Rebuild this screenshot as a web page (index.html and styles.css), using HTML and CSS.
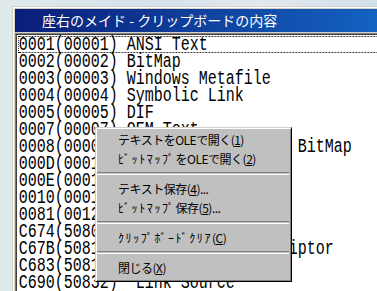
FILE: index.html
```html
<!DOCTYPE html>
<html lang="ja">
<head>
  <meta charset="UTF-8">
  <title>座右のメイド - クリップボードの内容</title>
  <link rel="stylesheet" href="styles.css">
</head>
<body>
  <div class="desk">
    <div class="window">
      <div class="titlebar">座右のメイド - クリップボードの内容</div>
      <div class="listbox">
        <div class="rows">
          <div class="row focus">0001(00001) ANSI Text</div>
          <div class="row">0002(00002) BitMap</div>
          <div class="row">0003(00003) Windows Metafile</div>
          <div class="row">0004(00004) Symbolic Link</div>
          <div class="row">0005(00005) DIF</div>
          <div class="row">0007(00007) OEM Text</div>
          <div class="row">0008(00008) Device Independent BitMap</div>
          <div class="row">000D(00013) Unicode Text</div>
          <div class="row">000E(00014) Enhanced Metafile</div>
          <div class="row">0010(00016) Locale Identifier</div>
          <div class="row">0081(00129) Display Text</div>
          <div class="row">C674(50804) DataObject</div>
          <div class="row">C67B(50811) *Link Source Descriptor</div>
          <div class="row">C683(50819) Object Descriptor</div>
          <div class="row">C690(50832) *Link Source</div>
        </div>
      </div>
    </div>
  </div>

  <div class="menu">
    <div class="item">テキストをOLEで開く(<u>1</u>)</div>
    <div class="item"><span class="hk">ﾋﾞｯﾄﾏｯﾌﾟ</span>をOLEで開く(<u>2</u>)</div>
    <div class="sep"></div>
    <div class="item">テキスト保存(<u>4</u>)...</div>
    <div class="item"><span class="hk">ﾋﾞｯﾄﾏｯﾌﾟ</span>保存(<u>5</u>)...</div>
    <div class="sep"></div>
    <div class="item"><span class="hk">ｸﾘｯﾌﾟﾎﾞｰﾄﾞｸﾘｱ</span>(<u>C</u>)</div>
    <div class="sep"></div>
    <div class="item">閉じる(<u>X</u>)</div>
  </div>
</body>
</html>
```

FILE: styles.css
```css
html, body {
  margin: 0;
  padding: 0;
  width: 377px;
  height: 291px;
  overflow: hidden;
}

body {
  position: relative;
  background: linear-gradient(to right, #dfeaea, #d4e2ec 40%, #e4e8ee 70%, #d0e0ea);
  font-family: "Noto Sans CJK JP", sans-serif;
}

.desk {
  padding: 6px 0 0 12px;
}

.window {
  background-color: #d4d0c8;
  border-top: 1px solid #d4d0c8;
  border-left: 1px solid #d4d0c8;
  box-shadow: inset 1px 1px 0 #ffffff;
  padding: 2px 0 0 2px;
  height: 290px;
}

.titlebar {
  height: 23px;
  line-height: 23px;
  padding-left: 27px;
  color: #fff;
  font-size: 14px;
  background: linear-gradient(to right, #0a1e78, #1462c0);
  white-space: nowrap;
}

.listbox {
  margin-top: 1px;
  border-top: 1px solid #808080;
  border-left: 1px solid #808080;
  box-shadow: inset 1px 1px 0 #404040;
  background-color: #fff;
  height: 260px;
  padding: 2px 0 0 2px;
  overflow: hidden;
}

.rows {
  width: 480px;
  transform: scaleX(0.75);
  transform-origin: left top;
  font-family: "Liberation Mono", monospace;
  font-size: 20px;
  color: #000;
}

.row {
  height: 17px;
  line-height: 17px;
  white-space: pre;
  padding-left: 1px;
}

.focus {
  outline: 1px dotted #000;
  outline-offset: -1px;
}

/* context menu */
.menu {
  position: absolute;
  left: 95px;
  top: 127px;
  width: 195px;
  padding: 2px 0 4px;
  background-color: #c0c0c0;
  border: 1px solid;
  border-color: #d4d0c8 #000 #000 #d4d0c8;
  box-shadow: inset 1px 1px 0 #fff, inset -1px -1px 0 #808080;
  font-size: 12px;
  letter-spacing: -0.5px;
  color: #000;
}

.item {
  height: 19px;
  line-height: 19px;
  padding-left: 22px;
  white-space: nowrap;
}

.hk {
  letter-spacing: 1.6px;
}

.item u {
  text-decoration-thickness: 1px;
  text-underline-offset: 1px;
}

.sep {
  height: 1px;
  margin: 4px 2px 4px 1px;
  border-top: 1px solid #808080;
  border-bottom: 1px solid #fff;
}
```
